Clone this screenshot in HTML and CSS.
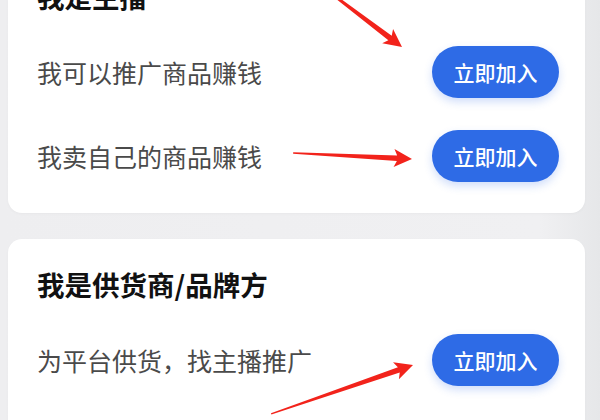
FILE: index.html
```html
<!DOCTYPE html>
<html lang="zh-CN">
<head>
<meta charset="utf-8">
<title>加入</title>
<link rel="stylesheet" href="styles.css">
</head>
<body>
<div class="page">
  <section class="card">
    <h2 class="title">我是主播</h2>
    <div class="row">
      <span class="desc">我可以推广商品赚钱</span>
      <a class="btn">立即加入</a>
    </div>
    <div class="row">
      <span class="desc">我卖自己的商品赚钱</span>
      <a class="btn">立即加入</a>
    </div>
  </section>
  <section class="card card-last">
    <h2 class="title">我是供货商/品牌方</h2>
    <div class="row">
      <span class="desc">为平台供货，找主播推广</span>
      <a class="btn">立即加入</a>
    </div>
  </section>
</div>
<svg class="arrows" width="600" height="420" viewBox="0 0 600 420" xmlns="http://www.w3.org/2000/svg">
  <g fill="#f2231b">
    <g transform="translate(402 47) rotate(37.1)">
      <polygon points="-112,-0.8 -15,-2.8 -18,-9 0,0 -18,9 -15,2.8 -112,0.8"/>
    </g>
    <g transform="translate(412 159) rotate(2.9)">
      <polygon points="-119,-0.7 -15,-2.8 -18,-9 0,0 -18,9 -15,2.8 -119,0.7"/>
    </g>
    <g transform="translate(413 365) rotate(-19)">
      <polygon points="-150,-0.7 -15,-2.8 -18,-9 0,0 -18,9 -15,2.8 -150,0.7"/>
    </g>
  </g>
</svg>
</body>
</html>
```
FILE: styles.css
```css
html, body {
  margin: 0;
  padding: 0;
  width: 600px;
  height: 420px;
  overflow: hidden;
}
body {
  background: linear-gradient(90deg, #eeeef0 0%, #f0f0f2 90%, #e6e7e9 100%);
  font-family: "Noto Sans CJK SC", "Noto Sans", sans-serif;
  position: relative;
}
.page {
  margin-top: -49px;
  padding: 0 15px 0 8px;
  display: flex;
  flex-direction: column;
  gap: 26px;
}
.card {
  background: #ffffff;
  border-radius: 14px;
  padding: 26px 26px 31px 29px;
  display: flex;
  flex-direction: column;
  box-shadow: 0 1px 3px rgba(0, 0, 0, 0.03);
}
.card-last {
  padding-bottom: 80px;
}
.title {
  margin: 0 0 31px;
  font-size: 27.5px;
  line-height: 38px;
  font-weight: 700;
  color: #111111;
}
.row {
  display: flex;
  align-items: center;
  justify-content: space-between;
  height: 52px;
}
.row + .row {
  margin-top: 32px;
}
.desc {
  font-size: 25px;
  line-height: 34px;
  color: #4a4a4a;
}
.btn {
  width: 127px;
  height: 52px;
  border-radius: 26px;
  background: #2e6be6;
  color: #ffffff;
  font-size: 21px;
  font-weight: 500;
  display: flex;
  align-items: center;
  justify-content: center;
  box-shadow: 0 4px 8px rgba(46, 107, 230, 0.22);
}
.arrows {
  position: absolute;
  top: 0;
  left: 0;
  pointer-events: none;
}
```
